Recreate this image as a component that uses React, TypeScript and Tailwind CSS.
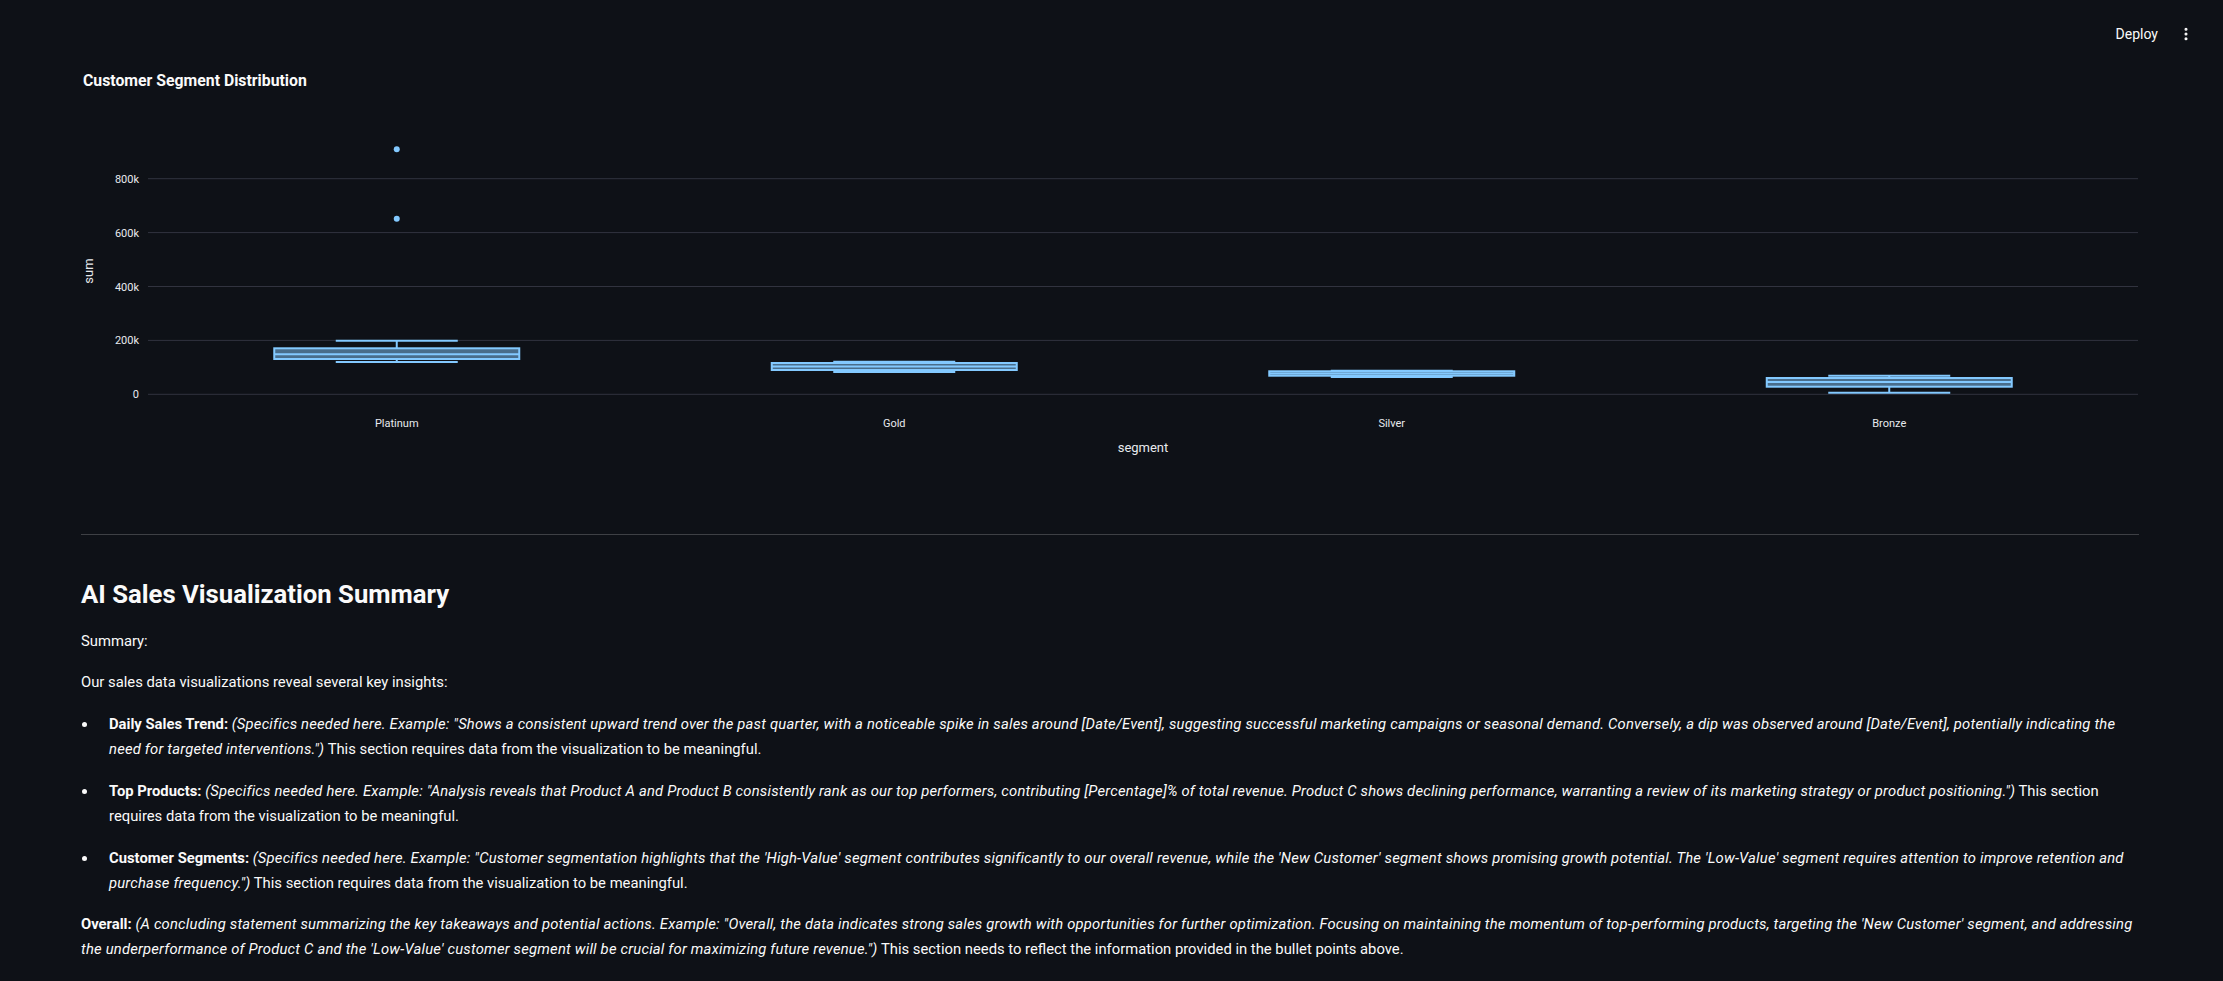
import type { ReactNode } from "react";
import { EllipsisVertical } from "lucide-react";

const BLUE = "#83c9ff";

type BoxProps = {
  cx: number;
  capTop: number;
  q3: number;
  med: number;
  q1: number;
  capBot: number;
};

function BoxPlot({ cx, capTop, q3, med, q1, capBot }: BoxProps) {
  const half = 122.5;
  const cap = 61;
  return (
    <g stroke={BLUE} strokeWidth={2}>
      <line x1={cx} x2={cx} y1={capTop} y2={q3} />
      <line x1={cx} x2={cx} y1={q1} y2={capBot} />
      <line x1={cx - cap} x2={cx + cap} y1={capTop} y2={capTop} />
      <line x1={cx - cap} x2={cx + cap} y1={capBot} y2={capBot} />
      <rect x={cx - half} y={q3} width={half * 2} height={q1 - q3} fill="rgba(131,201,255,0.5)" />
      <line x1={cx - half} x2={cx + half} y1={med} y2={med} />
    </g>
  );
}

function SegmentChart() {
  const ticks = [
    { label: "800k", y: 78.7 },
    { label: "600k", y: 132.6 },
    { label: "400k", y: 186.5 },
    { label: "200k", y: 240.4 },
    { label: "0", y: 294.3 },
  ];
  const cats = [
    { name: "Platinum", x: 316.75 },
    { name: "Gold", x: 814.25 },
    { name: "Silver", x: 1311.75 },
    { name: "Bronze", x: 1809.25 },
  ];

  return (
    <div>
      <div className="h-[20px] ml-[3px] mt-[3px] text-[15.8px] leading-[20px] font-bold text-[#fafafa]">
        Customer Segment Distribution
      </div>
      <svg width={2059} height={400} viewBox="0 0 2059 400" className="mt-[9px] block">
        {ticks.map((t) => (
          <g key={t.label}>
            <line x1={68} x2={2058} y1={t.y} y2={t.y} stroke="#31333f" strokeWidth={1} />
            <text x={59} y={t.y + 4} textAnchor="end" fontSize={11} fill="#e8eaee">
              {t.label}
            </text>
          </g>
        ))}
        <text
          x={10}
          y={171}
          fontSize={13}
          fill="#e8eaee"
          textAnchor="middle"
          transform="rotate(-90 10 171)"
          dominantBaseline="middle"
        >
          sum
        </text>

        {/* outliers + boxes */}
        <circle cx={316.75} cy={49.3} r={3} fill={BLUE} />
        <circle cx={316.75} cy={118.7} r={3} fill={BLUE} />
        <BoxPlot cx={316.75} capTop={240.7} q3={248.3} med={254.3} q1={259} capBot={262} />
        <BoxPlot cx={814.25} capTop={261.7} q3={263} med={266.5} q1={270} capBot={272} />
        <BoxPlot cx={1311.75} capTop={270.7} q3={271.3} med={273.5} q1={275.7} capBot={277} />
        <BoxPlot cx={1809.25} capTop={275.7} q3={278} med={282} q1={286.7} capBot={292.7} />

        {cats.map((c) => (
          <text key={c.name} x={c.x} y={327} textAnchor="middle" fontSize={11} fill="#e8eaee">
            {c.name}
          </text>
        ))}
        <text x={1063} y={351.5} textAnchor="middle" fontSize={13} fill="#e8eaee">
          segment
        </text>
      </svg>
    </div>
  );
}

function Bullet({ title, children }: { title: string; children: ReactNode }) {
  return (
    <li className="flex">
      <span className="w-[28px] shrink-0">
        <span className="block w-[5px] h-[5px] rounded-full bg-[#fafafa] mt-[10px] ml-[1px]" />
      </span>
      <p>
        <b className="font-bold">{title}</b> {children}
      </p>
    </li>
  );
}

export default function App() {
  return (
    <div className="min-h-screen bg-[#0e1117] text-[#fafafa] font-['Roboto',sans-serif]">
      {/* top bar */}
      <header className="h-[68px] flex items-center justify-end pr-[29px]">
        <span className="text-[14px] text-[#fafafa]">Deploy</span>
        <EllipsisVertical size={16} strokeWidth={2.6} className="ml-[20px] text-[#fafafa]" />
      </header>

      <main className="pl-[80px] w-[2139px]">
        <SegmentChart />

        <div className="h-px bg-[#3e4045] mt-[34px] ml-[1px]" />

        <div className="ml-[1px] text-[14.8px] leading-[24.5px]">
          <h2 className="mt-[44px] text-[25.7px] leading-[31px] font-bold">AI Sales Visualization Summary</h2>
          <p className="mt-[19px]">Summary:</p>
          <p className="mt-[16.5px]">Our sales data visualizations reveal several key insights:</p>

          <ul className="mt-[17.5px] flex flex-col gap-[18px]">
            <Bullet title="Daily Sales Trend:">
              <i className="tracking-[0.2px]">
                (Specifics needed here. Example: "Shows a consistent upward trend over the past quarter, with a
                noticeable spike in sales around [Date/Event], suggesting successful marketing campaigns or seasonal
                demand. Conversely, a dip was observed around [Date/Event], potentially indicating the
                <br />
                need for targeted interventions.")
              </i>{" "}
              This section requires data from the visualization to be meaningful.
            </Bullet>
            <Bullet title="Top Products:">
              <i className="tracking-[0.2px]">
                (Specifics needed here. Example: "Analysis reveals that Product A and Product B consistently rank as our
                top performers, contributing [Percentage]% of total revenue. Product C shows declining performance,
                warranting a review of its marketing strategy or product positioning.")
              </i>{" "}
              This section
              <br />
              requires data from the visualization to be meaningful.
            </Bullet>
            <Bullet title="Customer Segments:">
              <i className="tracking-[0.2px]">
                (Specifics needed here. Example: "Customer segmentation highlights that the 'High-Value' segment
                contributes significantly to our overall revenue, while the 'New Customer' segment shows promising
                growth potential. The 'Low-Value' segment requires attention to improve retention and
                <br />
                purchase frequency.")
              </i>{" "}
              This section requires data from the visualization to be meaningful.
            </Bullet>
          </ul>

          <p className="mt-[17px]">
            <b className="font-bold">Overall:</b>{" "}
            <i className="tracking-[0.2px]">
              (A concluding statement summarizing the key takeaways and potential actions. Example: "Overall, the data
              indicates strong sales growth with opportunities for further optimization. Focusing on maintaining the
              momentum of top-performing products, targeting the 'New Customer' segment, and addressing
              <br />
              the underperformance of Product C and the 'Low-Value' customer segment will be crucial for maximizing
              future revenue.")
            </i>{" "}
            This section needs to reflect the information provided in the bullet points above.
          </p>
        </div>
      </main>
    </div>
  );
}
